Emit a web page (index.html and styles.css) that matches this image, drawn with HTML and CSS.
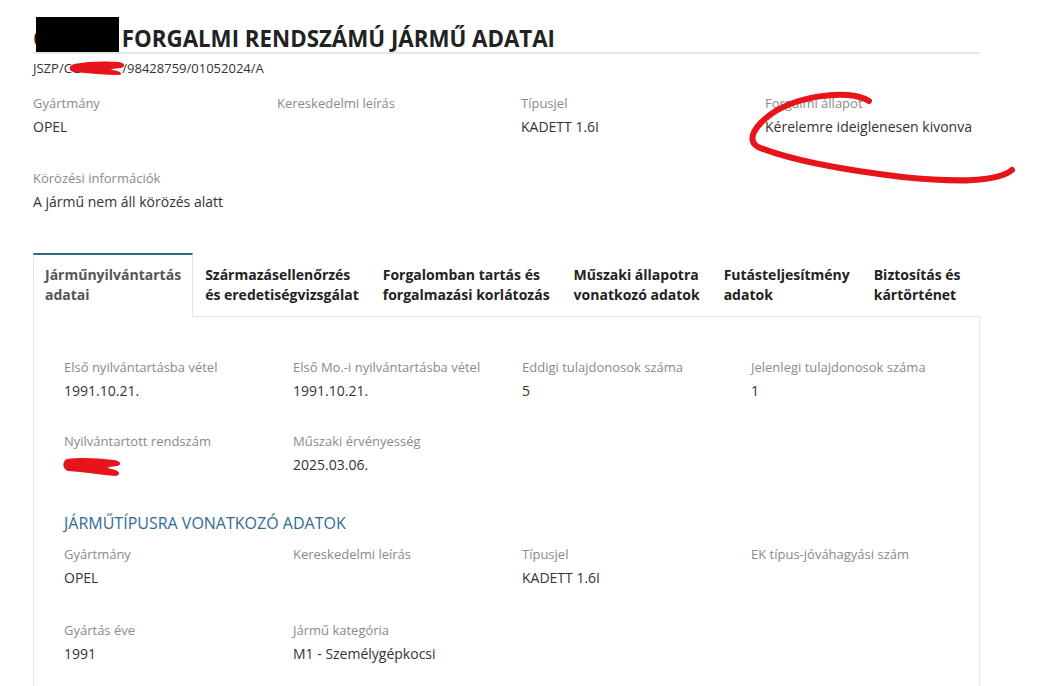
FILE: index.html
```html
<!DOCTYPE html>
<html lang="hu">
<head>
<meta charset="utf-8">
<title>Forgalmi rendszámú jármű adatai</title>
<link rel="stylesheet" href="styles.css">
</head>
<body>
<main class="page">
  <h1 class="title"><span class="plate">C</span> FORGALMI RENDSZÁMÚ JÁRMŰ ADATAI</h1>
  <div class="ref">JSZP/CG<span class="ref-mask"></span>/98428759/01052024/A</div>

  <section class="grid top-grid">
    <div class="field"><div class="label">Gyártmány</div><div class="value">OPEL</div></div>
    <div class="field"><div class="label">Kereskedelmi leírás</div><div class="value"></div></div>
    <div class="field"><div class="label">Típusjel</div><div class="value">KADETT 1.6I</div></div>
    <div class="field"><div class="label">Forgalmi állapot</div><div class="value">Kérelemre ideiglenesen kivonva</div></div>
    <div class="field"><div class="label">Körözési információk</div><div class="value">A jármű nem áll körözés alatt</div></div>
  </section>

  <nav class="tabs">
    <div class="tab active">Járműnyilvántartás<br>adatai</div>
    <div class="tab">Származásellenőrzés<br>és eredetiségvizsgálat</div>
    <div class="tab">Forgalomban tartás és<br>forgalmazási korlátozás</div>
    <div class="tab">Műszaki állapotra<br>vonatkozó adatok</div>
    <div class="tab">Futásteljesítmény<br>adatok</div>
    <div class="tab">Biztosítás és<br>kártörténet</div>
  </nav>

  <section class="panel">
    <div class="grid panel-grid">
      <div class="field"><div class="label">Első nyilvántartásba vétel</div><div class="value">1991.10.21.</div></div>
      <div class="field"><div class="label">Első Mo.-i nyilvántartásba vétel</div><div class="value">1991.10.21.</div></div>
      <div class="field"><div class="label">Eddigi tulajdonosok száma</div><div class="value">5</div></div>
      <div class="field"><div class="label">Jelenlegi tulajdonosok száma</div><div class="value">1</div></div>
      <div class="field"><div class="label">Nyilvántartott rendszám</div><div class="value">&nbsp;</div></div>
      <div class="field"><div class="label">Műszaki érvényesség</div><div class="value">2025.03.06.</div></div>
    </div>

    <h2 class="section-title">JÁRMŰTÍPUSRA VONATKOZÓ ADATOK</h2>
    <div class="grid panel-grid type-grid">
      <div class="field"><div class="label">Gyártmány</div><div class="value">OPEL</div></div>
      <div class="field"><div class="label">Kereskedelmi leírás</div><div class="value"></div></div>
      <div class="field"><div class="label">Típusjel</div><div class="value">KADETT 1.6I</div></div>
      <div class="field"><div class="label">EK típus-jóváhagyási szám</div><div class="value"></div></div>
      <div class="field"><div class="label">Gyártás éve</div><div class="value">1991</div></div>
      <div class="field"><div class="label">Jármű kategória</div><div class="value">M1 - Személygépkocsi</div></div>
    </div>
  </section>
</main>

<svg class="marks" width="1056" height="686" viewBox="0 0 1056 686" aria-hidden="true">
  <rect x="36" y="17" width="83" height="35" fill="#000"/>
  <path d="M74 64 C88 61 106 61 119 62 C125 63 126 67 121 68 C114 69 108 69 113 70 C120 71 124 74 119 75 C105 75 89 73 74 72 C68 71 68 66 74 64 Z" fill="#e8141b"/>
  <path d="M67 459 C80 457 98 458 114 460 C121 461 122 465 117 466 C111 467 104 467 111 469 C119 470 122 474 116 476 C101 475 84 472 68 471 C62 469 62 461 67 459 Z" fill="#e8141b"/>
  <path d="M869 101 C848 88 792 96 766 118 C752 130 748 141 758 147 C792 161 852 171 902 177 C952 182 996 183 1012 170" fill="none" stroke="#e8141b" stroke-width="6" stroke-linecap="round"/>
</svg>
</body>
</html>
```
FILE: styles.css
```css
html, body {
  margin: 0;
  padding: 0;
  background: #fff;
}
body {
  font-family: "Open Sans", "Noto Sans", sans-serif;
  color: #333;
  position: relative;
  min-height: 686px;
  overflow: hidden;
}
.page {
  width: 947px;
  margin-left: 33px;
  padding-top: 26px;
}
.title {
  margin: 0;
  font-size: 22.3px;
  line-height: 26px;
  font-weight: 700;
  color: #222;
  border-bottom: 2px solid #e6e6e6;
  white-space: nowrap;
}
.plate {
  display: inline-block;
  width: 83px;
}
.ref {
  margin-top: 4px;
  font-size: 13px;
  line-height: 20px;
  color: #333;
}
.ref-mask {
  display: inline-block;
  width: 41px;
}
.grid {
  display: grid;
}
.top-grid {
  margin-top: 13px;
  grid-template-columns: 244px 244px 244px 1fr;
}
.field {
  margin-bottom: 27px;
}
.label {
  font-size: 13px;
  line-height: 24px;
  color: #8a8a8a;
  white-space: nowrap;
}
.value {
  font-size: 14px;
  line-height: 24px;
  min-height: 24px;
  color: #333;
  white-space: nowrap;
}
.top-grid .field:last-child {
  margin-bottom: 0;
}
.tabs {
  display: flex;
  margin-top: 39px;
  position: relative;
  z-index: 1;
}
.tab {
  padding: 10px 11px 11px;
  font-size: 14px;
  line-height: 20px;
  font-weight: 700;
  color: #222;
  border: 1px solid transparent;
  border-top: 2px solid transparent;
  border-bottom: 0;
  white-space: nowrap;
}
.tab.active {
  color: #555;
  background: #fff;
  border-color: #e6e6e6;
  border-top-color: #2c6b86;
  margin-bottom: -1px;
  padding-bottom: 12px;
}
.panel {
  border: 1px solid #e6e6e6;
  padding: 38px 30px 0;
  min-height: 420px;
}
.panel-grid {
  grid-template-columns: 229px 229px 229px 1fr;
}
.panel .field {
  margin-bottom: 26px;
}
.panel .type-grid .field {
  margin-bottom: 28px;
}
.section-title {
  margin: 8px 0 7px;
  font-size: 16px;
  line-height: 24px;
  font-weight: 400;
  color: #2f6b94;
}
.marks {
  position: absolute;
  top: 0;
  left: 0;
  pointer-events: none;
}
```
